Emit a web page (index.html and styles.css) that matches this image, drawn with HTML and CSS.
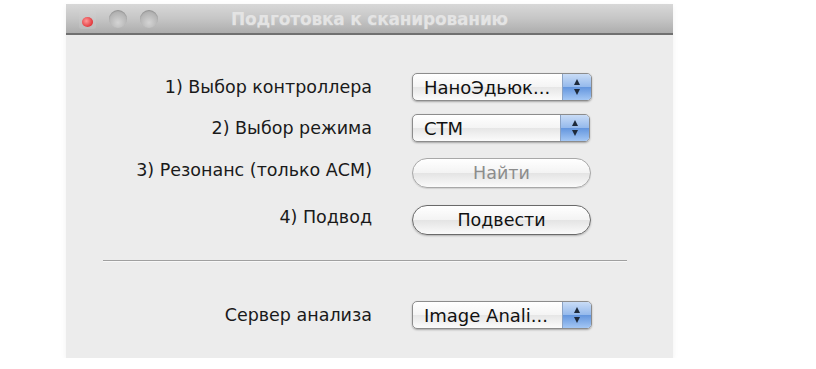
FILE: index.html
```html
<!DOCTYPE html>
<html lang="ru">
<head>
    <meta charset="UTF-8">
    <title>Подготовка к сканированию</title>
    <link rel="stylesheet" href="styles.css">
</head>
<body>
    <div class="window">
        <div class="titlebar">
            <div class="lights">
                <span class="light close"><span class="dot"></span></span>
                <span class="light"></span>
                <span class="light"></span>
            </div>
            <div class="title">Подготовка к сканированию</div>
        </div>
        <div class="content">
            <div class="row row-1">
                <div class="label">1) Выбор контроллера</div>
                <div class="popup"><span class="value">НаноЭдьюк...</span><span class="arrows"><i class="up"></i><i class="down"></i></span></div>
            </div>
            <div class="row row-2">
                <div class="label">2) Выбор режима</div>
                <div class="popup narrow"><span class="value">СТМ</span><span class="arrows"><i class="up"></i><i class="down"></i></span></div>
            </div>
            <div class="row row-3">
                <div class="label">3) Резонанс (только АСМ)</div>
                <div class="button disabled">Найти</div>
            </div>
            <div class="row row-4">
                <div class="label">4) Подвод</div>
                <div class="button">Подвести</div>
            </div>
            <div class="separator"></div>
            <div class="row row-server">
                <div class="label">Сервер анализа</div>
                <div class="popup"><span class="value">Image Anali...</span><span class="arrows"><i class="up"></i><i class="down"></i></span></div>
            </div>
        </div>
    </div>
</body>
</html>
```

FILE: styles.css
```css
body {
    margin: 0;
    background-color: #fff;
    font-family: "DejaVu Sans", "Noto Sans", sans-serif;
    color: #222;
}
.window {
    margin: 4px 0 0 66px;
    width: 607px;
    height: 354px;
    display: flex;
    flex-direction: column;
    box-shadow: 0 2px 6px rgba(0, 0, 0, 0.06);
}
.titlebar {
    height: 29px;
    border-bottom: 2px solid #707070;
    background: linear-gradient(#d8d8d8, #c6c6c6 50%, #adadad);
    position: relative;
    display: flex;
    align-items: center;
    justify-content: center;
}
.lights {
    position: absolute;
    left: 13px;
    top: 6px;
    display: flex;
    gap: 13px;
}
.light {
    width: 18px;
    height: 18px;
    border-radius: 50%;
    background: radial-gradient(circle at 50% 70%, #d4d4d4, #b0b0b0 70%, #9e9e9e);
    box-shadow: inset 0 1px 1px rgba(0, 0, 0, 0.15);
    display: flex;
    align-items: center;
    justify-content: center;
}
.light.close {
    width: 17px;
    height: 19px;
    border-radius: 3px;
    background: linear-gradient(#d2d2d2, #bcbcbc);
    box-shadow: none;
}
.dot {
    width: 11px;
    height: 10px;
    margin-top: 4px;
    border-radius: 50%;
    background: radial-gradient(circle at 40% 40%, #ff9a9a, #e2383c 70%);
}
.title {
    font-size: 17px;
    font-weight: bold;
    color: #e4e4e4;
    letter-spacing: -0.2px;
    text-shadow: 0 1px 0 rgba(255, 255, 255, 0.15);
}
.content {
    flex-grow: 1;
    background-color: #ececec;
    display: flex;
    flex-direction: column;
}
.row {
    display: flex;
    align-items: center;
    height: 30px;
    gap: 40px;
}
.row-1 { margin-top: 37px; }
.row-2 { margin-top: 11px; }
.row-3 { margin-top: 15px; }
.row-4 { margin-top: 17px; }
.row-server { margin-top: 38px; }
.label {
    width: 306px;
    text-align: right;
    font-size: 17.5px;
    color: #1a1a1a;
}
.row-3 .label, .row-4 .label { padding-bottom: 6px; }
.popup {
    width: 180px;
    height: 28px;
    box-sizing: border-box;
    border: 1px solid #8c8c8c;
    border-radius: 5px;
    background: linear-gradient(#ffffff, #f4f4f4 50%, #e6e6e6 51%, #fbfbfb);
    box-shadow: 0 1px 2px rgba(0, 0, 0, 0.3);
    display: flex;
    align-items: center;
    overflow: hidden;
}
.popup.narrow { width: 178px; }
.value {
    flex-grow: 1;
    padding-left: 11px;
    font-size: 18px;
    color: #111;
}
.arrows {
    width: 28px;
    height: 100%;
    border-left: 1px solid #8aa2c4;
    background: linear-gradient(#c9dcf6, #94b9ec 50%, #6496de 51%, #a4c7f4);
    display: flex;
    flex-direction: column;
    align-items: center;
    justify-content: center;
    gap: 4px;
}
.arrows i {
    width: 0;
    height: 0;
    border-left: 3.5px solid transparent;
    border-right: 3.5px solid transparent;
}
.arrows .up { border-bottom: 6px solid #1e2a3a; }
.arrows .down { border-top: 6px solid #1e2a3a; }
.button {
    width: 179px;
    height: 30px;
    box-sizing: border-box;
    border: 1px solid #6a6a6a;
    border-radius: 15px;
    background: linear-gradient(#ffffff, #f3f3f3 50%, #e4e4e4 51%, #fafafa);
    box-shadow: 0 1px 2px rgba(0, 0, 0, 0.25);
    display: flex;
    align-items: center;
    justify-content: center;
    font-size: 17.5px;
    color: #111;
}
.button.disabled {
    color: #8c8c8c;
    border-color: #a8a8a8;
    box-shadow: 0 1px 1px rgba(0, 0, 0, 0.12);
}
.separator {
    margin: 25px 46px 0 37px;
    border-top: 1px solid #a0a0a0;
    border-bottom: 1px solid #f8f8f8;
}
```
